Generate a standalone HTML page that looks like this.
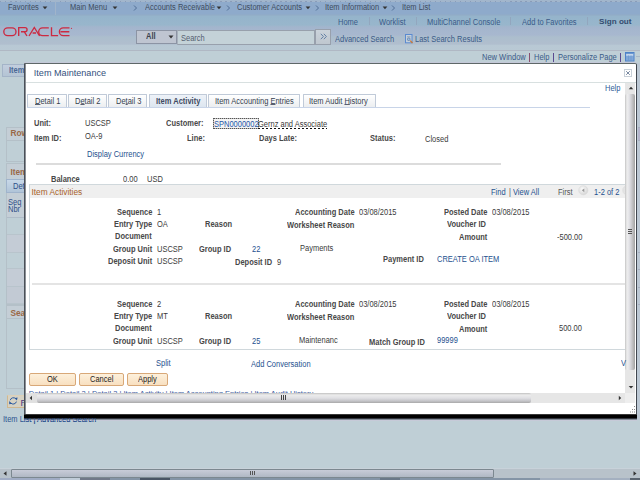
<!DOCTYPE html><html><head><meta charset="utf-8"><style>
html,body{margin:0;padding:0;width:640px;height:480px;overflow:hidden;background:#bfcfd6}
.r{position:absolute}
.t{position:absolute;font-family:"Liberation Sans",sans-serif;line-height:1;white-space:nowrap}
.s{font-size:8.3px;transform:scaleX(0.9036);transform-origin:0 0}
u{text-decoration:underline;text-underline-offset:0px;text-decoration-color:#5a6070}
</style></head><body>
<div class="r" style="left:0px;top:0px;width:640px;height:51px;background:linear-gradient(#8eaacb 0px,#8eaacb 14px,#92acc6 15px,#95b4cb 16.5px,#98b6cc 25px,#a3b5cd 27px,#a8b8cf 35px,#acbecd 37px,#b0bece 44px,#b8c8d4 45.5px,#b9c9d4 50px)"></div>
<div class="r" style="left:0px;top:0px;width:640px;height:2px;background:#a2b6cc"></div>
<div class="r" style="left:0;top:1px;width:640px;height:1px;background:repeating-linear-gradient(90deg,#8a9cb8 0 1.5px,transparent 1.5px 5px)"></div>
<div class="r" style="left:0px;top:50px;width:640px;height:1px;background:#b0b8c4"></div>
<div class="r" style="left:0px;top:51px;width:640px;height:429px;background:#bfcfd6"></div>
<div class="t s" style="left:7.9px;top:3px;color:#3e4c60;">Favorites</div>
<svg class="r" style="left:42px;top:5.5px" width="6" height="4"><path d="M0.6 0.5h4.8l-2.4 2.8z" fill="#333"/></svg>
<div class="r" style="left:55px;top:1px;width:1px;height:14px;background:#a0b4ca"></div>
<div class="t s" style="left:69.8px;top:3px;color:#3e4c60;">Main Menu</div>
<svg class="r" style="left:112px;top:5.5px" width="6" height="4"><path d="M0.6 0.5h4.8l-2.4 2.8z" fill="#333"/></svg>
<svg class="r" style="left:133px;top:5px" width="5" height="6"><path d="M1 0.5l2.5 2.5l-2.5 2.5" fill="none" stroke="#4a6890" stroke-width="0.9"/></svg>
<div class="t s" style="left:144.8px;top:3px;color:#3e4c60;">Accounts Receivable</div>
<svg class="r" style="left:216px;top:5.5px" width="6" height="4"><path d="M0.6 0.5h4.8l-2.4 2.8z" fill="#333"/></svg>
<svg class="r" style="left:226px;top:5px" width="5" height="6"><path d="M1 0.5l2.5 2.5l-2.5 2.5" fill="none" stroke="#4a6890" stroke-width="0.9"/></svg>
<div class="t s" style="left:237.3px;top:3px;color:#3e4c60;">Customer Accounts</div>
<svg class="r" style="left:305px;top:5.5px" width="6" height="4"><path d="M0.6 0.5h4.8l-2.4 2.8z" fill="#333"/></svg>
<svg class="r" style="left:315px;top:5px" width="5" height="6"><path d="M1 0.5l2.5 2.5l-2.5 2.5" fill="none" stroke="#4a6890" stroke-width="0.9"/></svg>
<div class="t s" style="left:325.3px;top:3px;color:#3e4c60;">Item Information</div>
<svg class="r" style="left:382px;top:5.5px" width="6" height="4"><path d="M0.6 0.5h4.8l-2.4 2.8z" fill="#333"/></svg>
<svg class="r" style="left:391px;top:5px" width="5" height="6"><path d="M1 0.5l2.5 2.5l-2.5 2.5" fill="none" stroke="#4a6890" stroke-width="0.9"/></svg>
<div class="t s" style="left:402.3px;top:3px;color:#3e4c60;">Item List</div>
<svg class="r" style="left:0;top:24px" width="80" height="16" viewBox="0 0 80 16">
<g fill="none" stroke="#cc2a40" stroke-width="1.35">
<rect x="3.8" y="3.8" width="12.2" height="7.8" rx="3.9"/>
<path d="M18.7 12V3.6h6.3a2.05 2.05 0 0 1 0 4.1H21M24.2 7.7l2.8 4.3"/>
<path d="M29 12l5.3-8.5l5.3 8.5M32.6 9h3.4"/>
<path d="M48.8 3.8h-6.2a3.9 3.9 0 0 0 0 7.8h6.2"/>
<path d="M51.5 3.2v8.4h6.6"/>
<path d="M69.5 3.8h-6.2a3.9 3.9 0 0 0 0 7.8h6.2M60.5 7.7h8.8"/>
</g><circle cx="71.5" cy="4.3" r="0.6" fill="#cc2a40"/></svg>
<div class="r" style="left:136px;top:30px;width:41px;height:14px;background:#bfc5d1;border:1px solid #8c94a4;box-sizing:border-box"></div>
<div class="t s" style="left:146.3px;top:32px;color:#3c4450;font-weight:bold;">All</div>
<svg class="r" style="left:168px;top:35px" width="6" height="4"><path d="M0.5 0.5h5l-2.5 3z" fill="#333"/></svg>
<div class="r" style="left:177px;top:30px;width:138px;height:15px;background:#c4d2d8;border:1px solid #98a0ac;border-left:1px solid #a8b0bc;box-sizing:border-box"></div>
<div class="t s" style="left:181.3px;top:34px;color:#556070;">Search</div>
<div class="r" style="left:315px;top:29px;width:16px;height:16px;background:linear-gradient(#cbd3db,#bfc7cf);border:1px solid #98a0ac;box-sizing:border-box"></div>
<svg class="r" style="left:320px;top:33px" width="8" height="7"><path d="M0.8 0.8l2.6 2.7l-2.6 2.7M3.8 0.8l2.6 2.7l-2.6 2.7" fill="none" stroke="#5878a0" stroke-width="0.9"/></svg>
<div class="t s" style="left:337.8px;top:18px;color:#3a5a88;">Home</div>
<div class="r" style="left:369px;top:17px;width:1px;height:8px;background:#92a6be"></div>
<div class="t s" style="left:379.1px;top:18px;color:#3a5a88;">Worklist</div>
<div class="r" style="left:416px;top:17px;width:1px;height:8px;background:#92a6be"></div>
<div class="t s" style="left:427.3px;top:18px;color:#3a5a88;">MultiChannel Console</div>
<div class="r" style="left:510px;top:17px;width:1px;height:8px;background:#92a6be"></div>
<div class="t s" style="left:521.8px;top:18px;color:#3a5a88;">Add to Favorites</div>
<div class="r" style="left:587px;top:17px;width:1px;height:8px;background:#92a6be"></div>
<div class="t" style="left:599.1px;top:18.4px;font-size:8.1px;color:#344c70;font-weight:bold;">Sign out</div>
<div class="t s" style="left:334.8px;top:35px;color:#3a5a88;">Advanced Search</div>
<svg class="r" style="left:404px;top:33px" width="10" height="11"><rect x="1.5" y="1.5" width="6.5" height="8.3" fill="#c4d0dc" stroke="#5a8ad0" stroke-width="1"/><path d="M3 3.5h3.5M3 5h3.5M3 7h2" stroke="#8a9ab0" stroke-width="0.6"/><circle cx="4.8" cy="6.2" r="1.3" fill="#a8c8e8" stroke="#4a6a98" stroke-width="0.6"/><path d="M6.2 7.6l2.3 2.4" stroke="#d07830" stroke-width="1.3"/></svg>
<div class="t s" style="left:414.8px;top:35px;color:#3a5a88;">Last Search Results</div>
<div class="t s" style="left:481.8px;top:53px;color:#3a5a88;">New Window</div>
<div class="r" style="left:529px;top:53px;width:1px;height:9px;background:#8a5070"></div>
<div class="t s" style="left:533.8px;top:53px;color:#3a5a88;">Help</div>
<div class="r" style="left:553px;top:53px;width:1px;height:9px;background:#5a4a90"></div>
<div class="t s" style="left:557.5px;top:53px;color:#3a5a88;">Personalize Page</div>
<div class="r" style="left:620px;top:53px;width:1px;height:9px;background:#5a4a90"></div>
<svg class="r" style="left:625px;top:52px" width="10" height="10"><rect x="0.5" y="0.5" width="8.5" height="8.5" fill="#8cb0dc" stroke="#4e82c8" stroke-width="1"/><rect x="1" y="1" width="7.5" height="1.2" fill="#6a98d0"/><rect x="1.2" y="2.4" width="7" height="1" fill="#eef4fa"/><path d="M1 5h7.5M1 7h7.5M3.5 3.5v5M6 3.5v5" stroke="#6a98d0" stroke-width="0.7"/></svg>
<div class="r" style="left:636px;top:56px;width:4px;height:1px;background:#a8b8c8"></div>
<div class="r" style="left:2px;top:64px;width:40px;height:13px;background:linear-gradient(#c2cede,#b4c4d4);border:1px solid #a4b4c8;box-sizing:border-box"></div>
<div class="t s" style="left:8.8px;top:66px;color:#4a6896;font-weight:bold;">Item</div>
<div class="r" style="left:6px;top:127px;width:40px;height:35px;border:1px solid #b4c0c8;box-sizing:border-box"></div>
<div class="r" style="left:7px;top:128px;width:39px;height:13px;background:#c4ced6"></div>
<div class="r" style="left:6px;top:140px;width:40px;height:1px;background:#b4c0c8"></div>
<div class="t" style="left:10.4px;top:129.0px;font-size:8.3px;color:#9a6846;font-weight:bold;">Row</div>
<div class="r" style="left:6px;top:163px;width:40px;height:142px;border:1px solid #b4c0c8;box-sizing:border-box"></div>
<div class="r" style="left:7px;top:164px;width:39px;height:15px;background:#c4ced6"></div>
<div class="t" style="left:10.4px;top:168.0px;font-size:8.3px;color:#9a6846;font-weight:bold;">Item</div>
<div class="r" style="left:6px;top:179px;width:40px;height:14px;background:linear-gradient(#c8d8e8,#b0c4d8);border:1px solid #a0b4cc;box-sizing:border-box"></div>
<div class="t s" style="left:12.8px;top:182px;color:#2e4e88;">Det</div>
<div class="r" style="left:7px;top:193px;width:39px;height:24px;background:#c4ced6"></div>
<div class="t s" style="left:7.8px;top:198px;color:#2e4e88;">Seq</div>
<div class="t s" style="left:7.8px;top:205px;color:#2e4e88;">Nbr</div>
<div class="r" style="left:7px;top:217px;width:39px;height:1px;background:#b0bcc8"></div>
<div class="r" style="left:7px;top:218px;width:39px;height:17px;background:#bfcfd6"></div>
<div class="r" style="left:7px;top:235px;width:39px;height:18px;background:#c4ccd6"></div>
<div class="r" style="left:7px;top:253px;width:39px;height:16px;background:#bfcfd6"></div>
<div class="r" style="left:7px;top:269px;width:39px;height:18px;background:#c4ccd6"></div>
<div class="r" style="left:7px;top:287px;width:39px;height:17px;background:#c2cad4"></div>
<div class="r" style="left:7px;top:234px;width:39px;height:1px;background:#b8c4cc"></div>
<div class="r" style="left:7px;top:252px;width:39px;height:1px;background:#b8c4cc"></div>
<div class="r" style="left:7px;top:268px;width:39px;height:1px;background:#b8c4cc"></div>
<div class="r" style="left:7px;top:286px;width:39px;height:1px;background:#b8c4cc"></div>
<div class="r" style="left:7px;top:303px;width:39px;height:1px;background:#b8c4cc"></div>
<div class="r" style="left:6px;top:305px;width:40px;height:84px;border:1px solid #b4c0c8;box-sizing:border-box"></div>
<div class="r" style="left:7px;top:306px;width:39px;height:13px;background:#c4ced6"></div>
<div class="r" style="left:6px;top:318px;width:40px;height:1px;background:#b4c0c8"></div>
<div class="t" style="left:10.4px;top:308.5px;font-size:8.3px;color:#9a6846;font-weight:bold;">Search</div>
<div class="r" style="left:7px;top:395px;width:40px;height:13px;background:#d6d2c4;border:1px solid #d0b890;border-top-color:#dcd0b8;box-sizing:border-box"></div>
<svg class="r" style="left:8px;top:395px" width="11" height="12"><g fill="none" stroke="#2a5aa0" stroke-width="1"><path d="M2.2 5.2A3.3 3.3 0 0 1 7.9 3.9"/><path d="M8.4 6.6A3.3 3.3 0 0 1 2.7 7.9"/></g><path d="M6.6 3.0L9.6 2.6L8.9 5.6z" fill="#2a5aa0"/><path d="M1.2 6.0L3.9 8.7L1.2 9.2z" fill="#2a5aa0"/></svg>
<div class="t" style="left:20.4px;top:398.5px;font-size:9.1px;color:#4a3a80;">R</div>
<div class="t s" style="left:3.2px;top:415px;color:#2e5490;">Item List | Advanced Search</div>
<div class="r" style="left:0px;top:468px;width:640px;height:10px;background:#b8c2ca"></div>
<div class="r" style="left:0px;top:468px;width:640px;height:1px;background:#c8d2da"></div>
<div class="r" style="left:11px;top:469px;width:483px;height:9px;background:linear-gradient(#c8ccd8,#b0b8c4);border:1px solid #7c8890;border-radius:1px;box-sizing:border-box"></div>
<svg class="r" style="left:3px;top:471px" width="4" height="5"><path d="M3.5 0.3v4.4L0.5 2.5z" fill="#333"/></svg>
<svg class="r" style="left:633px;top:471px" width="4" height="5"><path d="M0.5 0.3v4.4L3.5 2.5z" fill="#333"/></svg>
<div class="r" style="left:250px;top:471px;width:1px;height:4px;background:#555"></div>
<div class="r" style="left:252px;top:471px;width:1px;height:4px;background:#555"></div>
<div class="r" style="left:254px;top:471px;width:1px;height:4px;background:#555"></div>
<div class="r" style="left:0px;top:478px;width:640px;height:2px;background:#8494a6"></div>
<div class="r" style="left:0px;top:478px;width:60px;height:2px;background:#a0acc4"></div>
<div class="r" style="left:60px;top:478px;width:20px;height:2px;background:#c0ccd8"></div>
<div class="r" style="left:80px;top:478px;width:30px;height:2px;background:#707888"></div>
<div class="r" style="left:140px;top:478px;width:30px;height:2px;background:#4a5464"></div>
<div class="r" style="left:380px;top:478px;width:20px;height:2px;background:#6a7888"></div>
<div class="r" style="left:540px;top:478px;width:90px;height:2px;background:#a4b0c0"></div>
<div class="r" style="left:630px;top:478px;width:10px;height:2px;background:#5a6470"></div>
<div class="r" style="left:637px;top:63px;width:3px;height:357px;background:#bcc8d4"></div>
<div class="r" style="left:638px;top:127px;width:2px;height:13px;background:#b4b4cc"></div>
<div class="r" style="left:638px;top:127px;width:2px;height:1px;background:#a8b0c0"></div>
<div class="r" style="left:638px;top:140px;width:2px;height:1px;background:#a8b0c0"></div>
<div class="r" style="left:638px;top:252px;width:2px;height:1px;background:#a8b0c0"></div>
<div class="r" style="left:638px;top:269px;width:2px;height:1px;background:#a8b0c0"></div>
<div class="r" style="left:638px;top:287px;width:2px;height:1px;background:#a8b0c0"></div>
<div class="r" style="left:638px;top:304px;width:2px;height:1px;background:#a8b0c0"></div>
<div class="r" style="left:24px;top:62px;width:613px;height:1px;background:#c4c8d8"></div>
<div class="r" style="left:24px;top:63px;width:613px;height:352px;background:#fff;border-top:1px solid #5e6868;border-left:1px solid #4a5058;border-right:1px solid #40464e;box-sizing:border-box;border-top-right-radius:2px"></div>
<div class="r" style="left:25px;top:64px;width:1px;height:350px;background:#8c9096"></div>
<div class="r" style="left:24px;top:414px;width:613px;height:1px;background:#383838"></div>
<div class="r" style="left:24px;top:415px;width:613px;height:3px;background:#000"></div>
<div class="r" style="left:24px;top:418px;width:613px;height:1px;background:#30343c"></div>
<div class="r" style="left:24px;top:419px;width:613px;height:1px;background:#848c98"></div>
<div class="r" style="left:24px;top:420px;width:613px;height:1px;background:#c6cad8"></div>
<div class="r" style="left:24px;top:418px;width:100px;height:8px;overflow:hidden"><div class="t s" style="left:-20.8px;top:-3px;color:#2e5490">Item List | Advanced Search</div></div>
<div class="t" style="left:33.8px;top:69.0px;font-size:9.1px;color:#34507c;">Item Maintenance</div>
<div class="r" style="left:26px;top:82px;width:610px;height:1px;background:#d8e0e0"></div>
<div class="r" style="left:624px;top:69px;width:8px;height:8px;border:1px solid #c8d0d8;box-sizing:border-box"></div>
<svg class="r" style="left:625px;top:70px" width="6" height="6"><path d="M1.2 1.2l3.6 3.6M4.8 1.2l-3.6 3.6" stroke="#7888a0" stroke-width="1"/></svg>
<div class="r" style="left:625px;top:83px;width:10px;height:310px;background:#e6e6e6"></div>
<svg class="r" style="left:628px;top:86px" width="6" height="4"><path d="M0.7 3.3h4.6l-2.3-2.6z" fill="#333"/></svg>
<div class="r" style="left:625px;top:94px;width:10px;height:276px;background:linear-gradient(90deg,#c4c4c4 0,#eeeeee 2px,#e4e4e8 4px,#d0d0d4 6px,#b0b0b0 9px,#a0a0a0 10px);border-radius:2px"></div>
<div class="r" style="left:628px;top:229px;width:4px;height:1px;background:#555"></div>
<div class="r" style="left:628px;top:231px;width:4px;height:1px;background:#555"></div>
<div class="r" style="left:628px;top:233px;width:4px;height:1px;background:#555"></div>
<svg class="r" style="left:628px;top:385px" width="6" height="4"><path d="M0.7 1h4.6l-2.3 2.6z" fill="#333"/></svg>
<div class="r" style="left:26px;top:393px;width:609px;height:10px;background:#e6e6e6"></div>
<div class="r" style="left:26px;top:393px;width:11px;height:10px;background:#e0e0e0"></div>
<svg class="r" style="left:29px;top:395px" width="4" height="6"><path d="M3 0.8v4.4L0.6 3z" fill="#333"/></svg>
<svg class="r" style="left:618px;top:395px" width="4" height="6"><path d="M0.8 0.8v4.4L3.2 3z" fill="#333"/></svg>
<div class="r" style="left:37px;top:393px;width:494px;height:10px;background:linear-gradient(#c0c0c0 0,#ececec 2px,#e0e0e4 5px,#c4c4c8 8px,#a8a8a8 10px);border-radius:2px"></div>
<div class="r" style="left:281px;top:395px;width:1px;height:5px;background:#444"></div>
<div class="r" style="left:283px;top:395px;width:1px;height:5px;background:#444"></div>
<div class="r" style="left:285px;top:395px;width:1px;height:5px;background:#444"></div>
<div class="r" style="left:625px;top:393px;width:10px;height:10px;background:#eeeeee"></div>
<svg class="r" style="left:628px;top:405px" width="8" height="8"><path d="M6 1h1v1h-1zM4 4h1v1h-1zM6 4h1v1h-1zM2 6.5h1v1h-1zM4 6.5h1v1h-1zM6 6.5h1v1h-1z" fill="#8a8a8a"/></svg>
<div class="t s" style="left:604.5px;top:84px;color:#2e5a98;">Help</div>
<div class="r" style="left:27px;top:94px;width:39.5px;height:13px;background:linear-gradient(#ffffff,#eceef0);border:1px solid #c0cad8;border-bottom:none;box-sizing:border-box;border-radius:1px 1px 0 0"></div>
<div class="t s" style="left:34.5px;top:97px;color:#34404e;"><u>D</u>etail 1</div>
<div class="r" style="left:68px;top:94px;width:38.599999999999994px;height:13px;background:linear-gradient(#ffffff,#eceef0);border:1px solid #c0cad8;border-bottom:none;box-sizing:border-box;border-radius:1px 1px 0 0"></div>
<div class="t s" style="left:74.8px;top:97px;color:#34404e;">D<u>e</u>tail 2</div>
<div class="r" style="left:108.4px;top:94px;width:38.900000000000006px;height:13px;background:linear-gradient(#ffffff,#eceef0);border:1px solid #c0cad8;border-bottom:none;box-sizing:border-box;border-radius:1px 1px 0 0"></div>
<div class="t s" style="left:115.8px;top:97px;color:#34404e;">De<u>t</u>ail 3</div>
<div class="r" style="left:149.2px;top:94px;width:57.80000000000001px;height:13px;background:linear-gradient(#eef2f8,#dde6f0);border:1px solid #c0cad8;border-bottom:none;box-sizing:border-box;border-radius:1px 1px 0 0"></div>
<div class="t s" style="left:155.5px;top:97px;color:#3e4a62;font-weight:bold;">Item Activity</div>
<div class="r" style="left:208px;top:94px;width:92.30000000000001px;height:13px;background:linear-gradient(#ffffff,#eceef0);border:1px solid #c0cad8;border-bottom:none;box-sizing:border-box;border-radius:1px 1px 0 0"></div>
<div class="t s" style="left:215.2px;top:97px;color:#34404e;">Item Accounting <u>E</u>ntries</div>
<div class="r" style="left:302.5px;top:94px;width:73.10000000000002px;height:13px;background:linear-gradient(#ffffff,#eceef0);border:1px solid #c0cad8;border-bottom:none;box-sizing:border-box;border-radius:1px 1px 0 0"></div>
<div class="t s" style="left:308.8px;top:97px;color:#34404e;">Item Audit <u>H</u>istory</div>
<div class="r" style="left:27px;top:107px;width:563px;height:1px;background:#c8d4e8"></div>
<div class="t s" style="left:33.8px;top:119px;color:#484848;font-weight:bold;">Unit:</div>
<div class="t s" style="left:84.5px;top:119px;color:#3a3a3a;">USCSP</div>
<div class="t s" style="left:166.1px;top:119px;color:#484848;font-weight:bold;">Customer:</div>
<div class="r" style="left:213px;top:118px;width:46px;height:11px;background:#f4f4f4;border:1px solid #b8b8b8;outline:1px dotted #555;outline-offset:-1px;box-sizing:border-box"></div>
<div class="t s" style="left:214.0px;top:120px;color:#2456a8;">SPN0000002</div>
<div class="t s" style="left:258.3px;top:120px;color:#3a3a3a;">Gernz and Associate</div>
<div class="r" style="left:258px;top:128px;width:69px;height:1px;background:repeating-linear-gradient(90deg,#111 0 2px,transparent 2px 4px)"></div>
<div class="t s" style="left:33.8px;top:134px;color:#484848;font-weight:bold;">Item ID:</div>
<div class="t s" style="left:84.5px;top:132px;color:#3a3a3a;">OA-9</div>
<div class="t s" style="left:186.6px;top:134px;color:#484848;font-weight:bold;">Line:</div>
<div class="t s" style="left:258.6px;top:134px;color:#484848;font-weight:bold;">Days Late:</div>
<div class="t s" style="left:369.5px;top:134px;color:#484848;font-weight:bold;">Status:</div>
<div class="t s" style="left:424.6px;top:135px;color:#3a3a3a;">Closed</div>
<div class="t s" style="left:86.8px;top:150px;color:#24508e;">Display Currency</div>
<div class="r" style="left:36px;top:163px;width:465px;height:2px;background:#dcdcdc"></div>
<div class="t s" style="left:50.8px;top:175px;color:#484848;font-weight:bold;">Balance</div>
<div class="t s" style="left:123.0px;top:175px;color:#3a3a3a;">0.00</div>
<div class="t s" style="left:147.0px;top:175px;color:#3a3a3a;">USD</div>
<div class="r" style="left:29px;top:184px;width:596px;height:166px;border:1px solid #d0d8dc;border-right:none;box-sizing:border-box"></div>
<div class="r" style="left:30px;top:185px;width:595px;height:13px;background:#efefef"></div>
<div class="t" style="left:31.5px;top:187.5px;font-size:8.3px;color:#a8622a;">Item Activities</div>
<div class="t s" style="left:491.4px;top:188px;color:#24508e;">Find</div>
<div class="t s" style="left:509.4px;top:188px;color:#555;">|</div>
<div class="t s" style="left:512.8px;top:188px;color:#24508e;">View All</div>
<div class="t s" style="left:557.9px;top:188px;color:#555;">First</div>
<svg class="r" style="left:578px;top:185px" width="11" height="11"><defs><radialGradient id="cg" cx="0.4" cy="0.35" r="0.7"><stop offset="0" stop-color="#fafafa"/><stop offset="1" stop-color="#d4d4d4"/></radialGradient></defs><circle cx="5.3" cy="5.3" r="4.6" fill="url(#cg)" stroke="#d8d8d8" stroke-width="0.6"/><path d="M6.3 3.4v3.8L3.8 5.3z" fill="#999"/></svg>
<div class="t s" style="left:594.2px;top:188px;color:#24508e;">1-2 of 2</div>
<svg class="r" style="left:622px;top:185px" width="3" height="11"><circle cx="5.3" cy="5.3" r="4.6" fill="#e4e4e4" stroke="#dadada" stroke-width="0.6"/></svg>
<div class="t s" style="left:117.0px;top:208px;color:#484848;font-weight:bold;">Sequence</div>
<div class="t s" style="left:157.3px;top:208px;color:#3a3a3a;">1</div>
<div class="t s" style="left:113.5px;top:220px;color:#484848;font-weight:bold;">Entry Type</div>
<div class="t s" style="left:156.8px;top:220px;color:#3a3a3a;">OA</div>
<div class="t s" style="left:204.6px;top:220px;color:#484848;font-weight:bold;">Reason</div>
<div class="t s" style="left:115.4px;top:232px;color:#484848;font-weight:bold;">Document</div>
<div class="t s" style="left:113.1px;top:245px;color:#484848;font-weight:bold;">Group Unit</div>
<div class="t s" style="left:156.8px;top:245px;color:#3a3a3a;">USCSP</div>
<div class="t s" style="left:199.2px;top:245px;color:#484848;font-weight:bold;">Group ID</div>
<div class="t s" style="left:251.5px;top:245px;color:#24508e;">22</div>
<div class="t s" style="left:294.7px;top:208px;color:#484848;font-weight:bold;">Accounting Date</div>
<div class="t s" style="left:359.0px;top:208px;color:#3a3a3a;">03/08/2015</div>
<div class="t s" style="left:286.8px;top:221px;color:#484848;font-weight:bold;">Worksheet Reason</div>
<div class="t s" style="left:443.5px;top:208px;color:#484848;font-weight:bold;">Posted Date</div>
<div class="t s" style="left:491.7px;top:208px;color:#3a3a3a;">03/08/2015</div>
<div class="t s" style="left:447.0px;top:220px;color:#484848;font-weight:bold;">Voucher ID</div>
<div class="t s" style="left:458.7px;top:233px;color:#484848;font-weight:bold;">Amount</div>
<div class="t s" style="left:107.9px;top:257px;color:#484848;font-weight:bold;">Deposit Unit</div>
<div class="t s" style="left:156.8px;top:257px;color:#3a3a3a;">USCSP</div>
<div class="t s" style="left:235.1px;top:258px;color:#484848;font-weight:bold;">Deposit ID</div>
<div class="t s" style="left:277.0px;top:258px;color:#3a3a3a;">9</div>
<div class="t s" style="left:299.5px;top:244px;color:#3a3a3a;">Payments</div>
<div class="t s" style="left:383.4px;top:255px;color:#484848;font-weight:bold;">Payment ID</div>
<div class="t s" style="left:436.5px;top:255px;color:#24508e;">CREATE OA ITEM</div>
<div class="t s" style="left:557.1px;top:233px;color:#3a3a3a;">-500.00</div>
<div class="r" style="left:32px;top:283px;width:593px;height:2px;background:#e4e4e4"></div>
<div class="t s" style="left:117.0px;top:300px;color:#484848;font-weight:bold;">Sequence</div>
<div class="t s" style="left:157.3px;top:300px;color:#3a3a3a;">2</div>
<div class="t s" style="left:113.5px;top:312px;color:#484848;font-weight:bold;">Entry Type</div>
<div class="t s" style="left:156.8px;top:312px;color:#3a3a3a;">MT</div>
<div class="t s" style="left:204.6px;top:312px;color:#484848;font-weight:bold;">Reason</div>
<div class="t s" style="left:115.4px;top:324px;color:#484848;font-weight:bold;">Document</div>
<div class="t s" style="left:113.1px;top:337px;color:#484848;font-weight:bold;">Group Unit</div>
<div class="t s" style="left:156.8px;top:337px;color:#3a3a3a;">USCSP</div>
<div class="t s" style="left:199.2px;top:337px;color:#484848;font-weight:bold;">Group ID</div>
<div class="t s" style="left:251.5px;top:337px;color:#24508e;">25</div>
<div class="t s" style="left:294.7px;top:300px;color:#484848;font-weight:bold;">Accounting Date</div>
<div class="t s" style="left:359.0px;top:300px;color:#3a3a3a;">03/08/2015</div>
<div class="t s" style="left:286.8px;top:313px;color:#484848;font-weight:bold;">Worksheet Reason</div>
<div class="t s" style="left:443.5px;top:300px;color:#484848;font-weight:bold;">Posted Date</div>
<div class="t s" style="left:491.7px;top:300px;color:#3a3a3a;">03/08/2015</div>
<div class="t s" style="left:447.0px;top:312px;color:#484848;font-weight:bold;">Voucher ID</div>
<div class="t s" style="left:458.7px;top:325px;color:#484848;font-weight:bold;">Amount</div>
<div class="t s" style="left:299.1px;top:336px;color:#3a3a3a;">Maintenanc</div>
<div class="t s" style="left:369.1px;top:338px;color:#484848;font-weight:bold;">Match Group ID</div>
<div class="t s" style="left:436.6px;top:336px;color:#24508e;">99999</div>
<div class="t s" style="left:559.3px;top:324px;color:#3a3a3a;">500.00</div>
<div class="t s" style="left:156.4px;top:359px;color:#24508e;">Split</div>
<div class="t s" style="left:251.1px;top:360px;color:#24508e;">Add Conversation</div>
<div class="t s" style="left:620.8px;top:359px;color:#24508e;">V</div>
<div class="r" style="left:29px;top:373px;width:47px;height:13px;background:linear-gradient(#fdf0dc,#f8e0c0);border:1px solid #d8a878;border-radius:2px;box-sizing:border-box"></div>
<div class="t s" style="left:47.0px;top:375px;color:#222;">OK</div>
<div class="r" style="left:79px;top:373px;width:45px;height:13px;background:linear-gradient(#fdf0dc,#f8e0c0);border:1px solid #d8a878;border-radius:2px;box-sizing:border-box"></div>
<div class="t s" style="left:89.6px;top:375px;color:#222;">Cancel</div>
<div class="r" style="left:127px;top:373px;width:41px;height:13px;background:linear-gradient(#fdf0dc,#f8e0c0);border:1px solid #d8a878;border-radius:2px;box-sizing:border-box"></div>
<div class="t s" style="left:138.1px;top:375px;color:#222;">Apply</div>
<div class="r" style="left:26px;top:390px;width:599px;height:3px;overflow:hidden"><div class="t" style="left:2.8px;top:0px;font-size:7.5px;color:#3a5aa0">Detail 1 | Detail 2 | Detail 3 | Item Activity | Item Accounting Entries | Item Audit History</div></div>
</body></html>
